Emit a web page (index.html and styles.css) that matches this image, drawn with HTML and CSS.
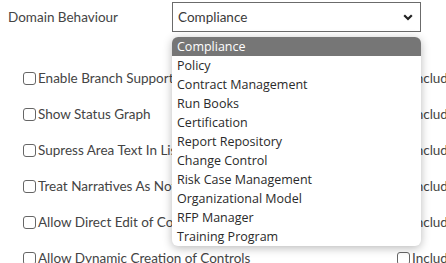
FILE: index.html
```html
<!DOCTYPE html>
<html>
<head>
    <title>Domain Settings</title>
    <meta name="viewport" content="width=device-width, initial-scale=1.0">
<link rel="stylesheet" href="styles.css">
</head>
<body>
    <div class="settings">
        <div class="field-row">
            <label class="field-label">Domain Behaviour</label>
            <div class="select-wrap">
                <div class="select-box">
                    <span class="select-value">Compliance</span>
                    <svg class="chevron" width="10" height="7" viewBox="0 0 10 7">
                        <path d="M1.2 1.2 L5 5 L8.8 1.2" fill="none" stroke="#222" stroke-width="2.2"/>
                    </svg>
                </div>
                <ul class="select-list">
                    <li class="selected">Compliance</li>
                    <li>Policy</li>
                    <li>Contract Management</li>
                    <li>Run Books</li>
                    <li>Certification</li>
                    <li>Report Repository</li>
                    <li>Change Control</li>
                    <li>Risk Case Management</li>
                    <li>Organizational Model</li>
                    <li>RFP Manager</li>
                    <li>Training Program</li>
                </ul>
            </div>
        </div>

        <div class="options">
            <label class="option"><input type="checkbox"><span>Enable Branch Support</span></label>
            <label class="option"><input type="checkbox"><span>Include Branches</span></label>
            <label class="option"><input type="checkbox"><span>Show Status Graph</span></label>
            <label class="option"><input type="checkbox"><span>Include Status</span></label>
            <label class="option"><input type="checkbox"><span>Supress Area Text In Lists</span></label>
            <label class="option"><input type="checkbox"><span>Include Areas</span></label>
            <label class="option"><input type="checkbox"><span>Treat Narratives As Notes</span></label>
            <label class="option"><input type="checkbox"><span>Include Notes</span></label>
            <label class="option"><input type="checkbox"><span>Allow Direct Edit of Controls</span></label>
            <label class="option"><input type="checkbox"><span>Include Inactive</span></label>
            <label class="option"><input type="checkbox"><span>Allow Dynamic Creation of Controls</span></label>
            <label class="option"><input type="checkbox"><span>Include Archived</span></label>
        </div>
    </div>
</body>
</html>
```

FILE: styles.css
```css
body, html {
    margin: 0;
    padding: 0;
    overflow: hidden;
    background-color: #ffffff;
    color: #444444;
    font-family: "Lato", "Open Sans", sans-serif;
    font-size: 13.5px;
}

.settings {
    width: 446px;
    padding-top: 2px;
    overflow: hidden;
}

.field-row {
    display: flex;
    align-items: center;
    height: 30px;
}

.field-label {
    width: 164px;
    padding-left: 8px;
}

.select-wrap {
    position: relative;
    width: 249px;
}

.select-box {
    display: flex;
    align-items: center;
    justify-content: space-between;
    height: 28px;
    border: 1px solid #6b6b6b;
    padding: 0 7px 0 5px;
    background: #fff;
}

.select-value {
    color: #3a3a3a;
}

.chevron {
    display: block;
}

.select-list {
    position: absolute;
    top: 35px;
    left: 0;
    width: 249px;
    margin: 0;
    padding: 0;
    list-style: none;
    background: #fff;
    border-radius: 6px;
    box-shadow: 0 2px 10px rgba(0, 0, 0, 0.28);
    overflow: hidden;
    font-family: "Open Sans", sans-serif;
    font-size: 12.5px;
    z-index: 2;
}

.select-list li {
    height: 19px;
    line-height: 19px;
    padding-left: 5px;
    color: #2a2a2a;
}

.select-list li.selected {
    background: #767676;
    color: #fff;
}

.options {
    display: grid;
    grid-template-columns: 374px auto;
    row-gap: 18px;
    padding: 37px 0 0 23px;
}

.option {
    display: flex;
    align-items: center;
    height: 18px;
    white-space: nowrap;
    overflow: hidden;
}

.option input {
    flex: none;
    appearance: none;
    -webkit-appearance: none;
    width: 13px;
    height: 13px;
    margin: 0 2px 0 0;
    border: 1px solid #666;
    border-radius: 3px;
    background: #fff;
}
```
